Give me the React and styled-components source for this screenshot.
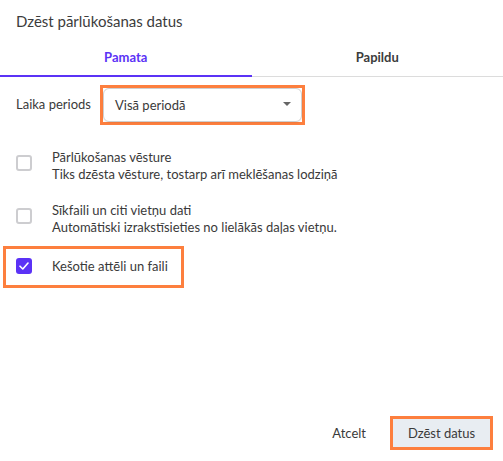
import styled, { createGlobalStyle } from 'styled-components';

const GlobalStyle = createGlobalStyle`
  html, body {
    margin: 0;
    padding: 0;
    background: #fff;
  }
  * {
    box-sizing: border-box;
  }
`;

const ACCENT = '#5b32f6';
const MARK = '#fd7f3e';

// STYLES
const Dialog = styled.div`
  width: 503px;
  height: 461px;
  display: flex;
  flex-direction: column;
  background: #fff;
  font-family: 'Lato', 'Noto Sans', sans-serif;
  color: #3a3a3a;
  font-size: 13px;
`;

const Title = styled.div`
  padding: 11px 16px 0;
  height: 38px;
  font-size: 15px;
  line-height: 20px;
  color: #3c3c3c;
`;

const Tabs = styled.div`
  display: flex;
  border-bottom: 1px solid #dcdcdc;
`;

const Tab = styled.div`
  flex: 1;
  height: 39px;
  display: flex;
  align-items: center;
  justify-content: center;
  font-size: 13px;
  font-weight: 700;
  color: ${(props) => (props.active ? ACCENT : '#3c3c3c')};
  border-bottom: 2px solid ${(props) => (props.active ? ACCENT : 'transparent')};
  margin-bottom: -1px;
`;

const PeriodRow = styled.div`
  display: flex;
  align-items: center;
  padding: 0 13px 0 16px;
  margin-top: 8px;
`;

const PeriodLabel = styled.span`
  width: 84px;
  margin-top: -3px;
`;

const Marked = styled.div`
  border: 3px solid ${MARK};
`;

const Select = styled.div`
  width: 199px;
  height: 34px;
  border: 1px solid #cfcfcf;
  border-radius: 6px;
  display: flex;
  align-items: center;
  justify-content: space-between;
  padding: 0 10px 0 11px;
  box-shadow: 0 1px 2px rgba(0, 0, 0, 0.06);
`;

const Caret = styled.span`
  width: 0;
  height: 0;
  border-left: 4px solid transparent;
  border-right: 4px solid transparent;
  border-top: 4px solid #666;
  margin-top: -2px;
`;

const List = styled.div`
  display: flex;
  flex-direction: column;
  align-items: flex-start;
  padding-top: 24px;
`;

const Item = styled.div`
  display: flex;
  align-items: ${(props) => (props.single ? 'center' : 'flex-start')};
  gap: 20px;
  line-height: 17px;
  padding: ${(props) => (props.marked ? '9px 13px 10px 10px' : '0 16px')};
  margin: ${(props) => (props.marked ? '-9px 0 0 3px' : '0 0 19px')};
  border: ${(props) => (props.marked ? `3px solid ${MARK}` : 'none')};
`;

const Box = styled.span`
  flex: none;
  width: 16px;
  height: 16px;
  border-radius: 3px;
  margin-top: ${(props) => (props.checked ? '-1px' : '6px')};
  border: ${(props) => (props.checked ? 'none' : '2px solid #cdcdd0')};
  background: ${(props) => (props.checked ? ACCENT : '#fff')};
  display: flex;
  align-items: center;
  justify-content: center;
`;

const Texts = styled.div`
  display: flex;
  flex-direction: column;
`;

const Footer = styled.div`
  margin-top: auto;
  display: flex;
  justify-content: flex-end;
  align-items: center;
  padding: 0 10px 11px 0;
  gap: 24px;
`;

const TextButton = styled.span`
  font-size: 13px;
  color: #3a3a3a;
`;

const MainButton = styled.div`
  width: 103px;
  height: 34px;
  display: flex;
  align-items: center;
  justify-content: center;
  background: #e8edf2;
  border: 3px solid ${MARK};
  font-size: 13px;
  color: #3a3a3a;
`;

function Check() {
  return (
    <svg width="10" height="8" viewBox="0 0 10 8">
      <path d="M1 4.2 L3.8 7 L9 1" fill="none" stroke="#fff" strokeWidth="1.6" strokeLinecap="round" strokeLinejoin="round" />
    </svg>
  );
}

export default function App() {
  return (
    <>
      <GlobalStyle />
      <Dialog>
        <Title>Dzēst pārlūkošanas datus</Title>
        <Tabs>
          <Tab active>Pamata</Tab>
          <Tab>Papildu</Tab>
        </Tabs>
        <PeriodRow>
          <PeriodLabel>Laika periods</PeriodLabel>
          <Marked>
            <Select>
              <span>Visā periodā</span>
              <Caret />
            </Select>
          </Marked>
        </PeriodRow>
        <List>
          <Item>
            <Box />
            <Texts>
              <span>Pārlūkošanas vēsture</span>
              <span>Tiks dzēsta vēsture, tostarp arī meklēšanas lodziņā</span>
            </Texts>
          </Item>
          <Item>
            <Box />
            <Texts>
              <span>Sīkfaili un citi vietņu dati</span>
              <span>Automātiski izrakstīsieties no lielākās daļas vietņu.</span>
            </Texts>
          </Item>
          <Item marked single>
            <Box checked>
              <Check />
            </Box>
            <span>Kešotie attēli un faili</span>
          </Item>
        </List>
        <Footer>
          <TextButton>Atcelt</TextButton>
          <MainButton>Dzēst datus</MainButton>
        </Footer>
      </Dialog>
    </>
  );
}
